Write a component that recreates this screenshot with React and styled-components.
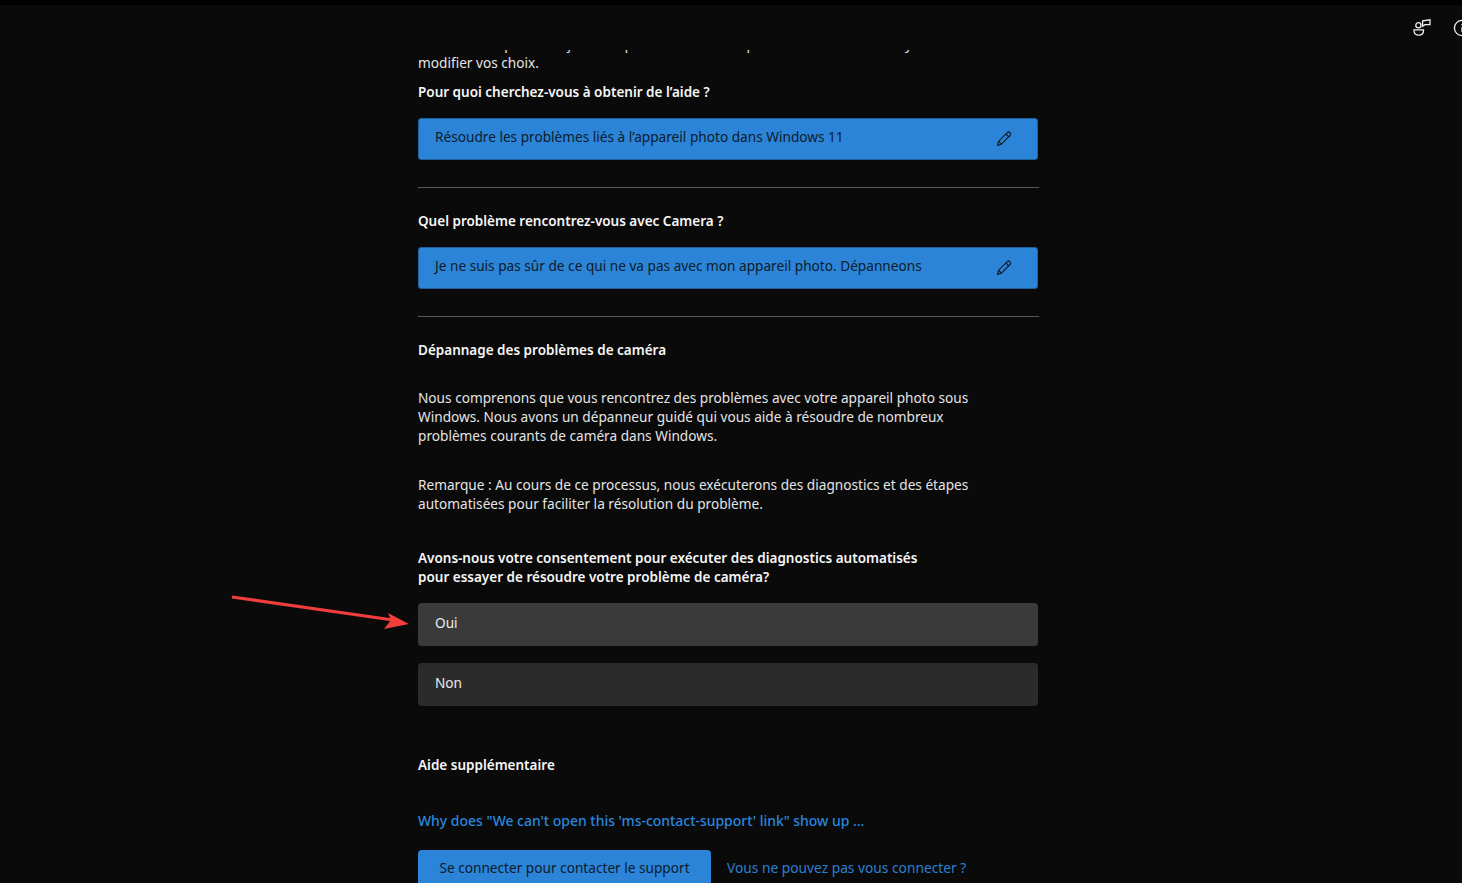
import styled, { createGlobalStyle } from "styled-components";

const GlobalStyle = createGlobalStyle`
  html, body {
    margin: 0;
    height: 100%;
    overflow: hidden;
    background: #0a0a0b;
  }
  body {
    font-family: "Noto Sans", "Open Sans", "Liberation Sans", sans-serif;
    font-size: 13.65px;
    line-height: 19px;
    color: #e4e4e4;
  }
`;

function PencilIcon() {
  return (
    <svg width="18" height="18" viewBox="0 0 18 18" fill="none" stroke="#10202f" strokeWidth="1.2" strokeLinejoin="round">
      <path d="M2.5 15.5 L3.6 11.3 L12.2 2.7 C13 1.9 14.2 1.9 15 2.7 C15.8 3.5 15.8 4.7 15 5.5 L6.4 14.1 Z" />
      <path d="M11 4 L13.8 6.8" />
      <path d="M3.6 11.3 L6.4 14.1" />
    </svg>
  );
}

function ContactIcon() {
  return (
    <svg width="18" height="18" viewBox="0 0 18 18" fill="none" stroke="#f0f0f0" strokeWidth="1.3">
      <circle cx="5.4" cy="6.2" r="2.6" />
      <path d="M1 10.8 H10.5 V11.5 C10.5 14.4 8.4 16.2 5.7 16.2 C3 16.2 1 14.4 1 11.5 Z" />
      <path d="M9.6 5.4 V1.8 L17 0.8 V5.6 H11.8 L9.6 7.2 Z" />
    </svg>
  );
}

function InfoIcon() {
  return (
    <svg width="18" height="18" viewBox="0 0 18 18" fill="none" stroke="#f0f0f0" strokeWidth="1.3">
      <circle cx="9" cy="9" r="7.6" />
      <path d="M9 8 V13" />
      <path d="M9 5 V6.2" />
    </svg>
  );
}

function AnnotationArrow() {
  return (
    <ArrowSvg width="190" height="50" viewBox="0 0 190 50">
      <path d="M1 12 L162 35" stroke="#f23d3d" strokeWidth="3.2" fill="none" />
      <path d="M178 39 L153 44 L160 35 L157 28 Z" fill="#f23d3d" />
    </ArrowSvg>
  );
}

function ChoiceSummary({ children }) {
  return (
    <SummaryBox>
      <span>{children}</span>
      <PencilIcon />
    </SummaryBox>
  );
}

export default function App() {
  return (
    <>
      <GlobalStyle />
      <TopBar />
      <Viewport>
        <StickyHeader>
          <HeaderIcons>
            <ContactIcon />
            <InfoIcon />
          </HeaderIcons>
        </StickyHeader>
        <AnnotationArrow />
        <Column>
          <ScrolledText>
            Voici tous les points en jeu à ce que vous avez noté pour le moment et donc y
            <br />
            modifier vos choix.
          </ScrolledText>
          <Heading $top={10}>Pour quoi cherchez-vous à obtenir de l’aide ?</Heading>
          <ChoiceSummary>Résoudre les problèmes liés à l’appareil photo dans Windows 11</ChoiceSummary>
          <Divider />
          <Heading $top={23}>Quel problème rencontrez-vous avec Camera ?</Heading>
          <ChoiceSummary>Je ne suis pas sûr de ce qui ne va pas avec mon appareil photo. Dépanneons</ChoiceSummary>
          <Divider />
          <Heading $top={23}>Dépannage des problèmes de caméra</Heading>
          <Paragraph $top={29}>
            Nous comprenons que vous rencontrez des problèmes avec votre appareil photo sous
            <br />
            Windows. Nous avons un dépanneur guidé qui vous aide à résoudre de nombreux
            <br />
            problèmes courants de caméra dans Windows.
          </Paragraph>
          <Paragraph $top={30}>
            Remarque : Au cours de ce processus, nous exécuterons des diagnostics et des étapes
            <br />
            automatisées pour faciliter la résolution du problème.
          </Paragraph>
          <Heading $top={35}>
            Avons-nous votre consentement pour exécuter des diagnostics automatisés
            <br />
            pour essayer de résoudre votre problème de caméra?
          </Heading>
          <AnswerButton $top={17} $active>Oui</AnswerButton>
          <AnswerButton $top={17}>Non</AnswerButton>
          <Heading $top={49}>Aide supplémentaire</Heading>
          <HelpLink>Why does "We can't open this 'ms-contact-support' link" show up ...</HelpLink>
          <ActionRow>
            <SignInButton>Se connecter pour contacter le support</SignInButton>
            <SecondaryLink>Vous ne pouvez pas vous connecter ?</SecondaryLink>
          </ActionRow>
        </Column>
      </Viewport>
    </>
  );
}

const TopBar = styled.div`
  height: 5px;
  background: #000;
`;

const Viewport = styled.div`
  position: relative;
  height: 878px;
  overflow: hidden;
  background: #0a0a0b;
`;

const StickyHeader = styled.header`
  position: absolute;
  top: 0;
  left: 0;
  right: 0;
  height: 45px;
  background: #0a0a0b;
  z-index: 2;
`;

const HeaderIcons = styled.div`
  position: absolute;
  top: 14px;
  left: 1413px;
  display: flex;
  gap: 22px;
`;

const ArrowSvg = styled.svg`
  position: absolute;
  left: 231px;
  top: 580px;
  z-index: 3;
`;

const Column = styled.main`
  width: 621px;
  margin-left: 418px;
  padding-top: 28.5px;
`;

const ScrolledText = styled.p`
  margin: 0;
  white-space: nowrap;
`;

const Heading = styled.h2`
  margin: ${({ $top }) => $top + 1}px 0 -1px;
  font-size: 13.5px;
  line-height: 19px;
  font-weight: 600;
  color: #f6f6f6;
`;

const Paragraph = styled.p`
  margin: ${({ $top }) => $top}px 0 0;
`;

const SummaryBox = styled.div`
  display: flex;
  align-items: center;
  justify-content: space-between;
  height: 42px;
  margin-top: 17px;
  padding: 0 24px 0 16px;
  box-sizing: border-box;
  width: 620px;
  background: #2b84d8;
  border: 1px solid #1f5f9c;
  border-radius: 3px;
  color: #0e1c2a;

  span {
    position: relative;
    top: -2px;
  }
`;

const Divider = styled.hr`
  margin: 27px 0 0;
  border: 0;
  height: 1px;
  background: #565656;
`;

const AnswerButton = styled.div`
  display: flex;
  align-items: center;
  height: 43px;
  width: 620px;
  margin-top: ${({ $top }) => $top}px;
  padding: 0 17px 4px;
  box-sizing: border-box;
  border-radius: 4px;
  background: ${({ $active }) => ($active ? "#3a3a3a" : "#2b2b2b")};
  color: #ececec;
`;

const HelpLink = styled.a`
  display: block;
  margin-top: 37px;
  font-size: 13.95px;
  color: #2a86dc;
  font-weight: 500;
`;

const ActionRow = styled.div`
  display: flex;
  align-items: center;
  gap: 16px;
  margin-top: 20px;
`;

const SignInButton = styled.div`
  display: flex;
  align-items: center;
  justify-content: center;
  width: 293px;
  height: 36px;
  border-radius: 4px;
  background: #2b84d8;
  color: #0e1c2a;
`;

const SecondaryLink = styled.a`
  font-size: 13.75px;
  color: #2a80d0;
`;
